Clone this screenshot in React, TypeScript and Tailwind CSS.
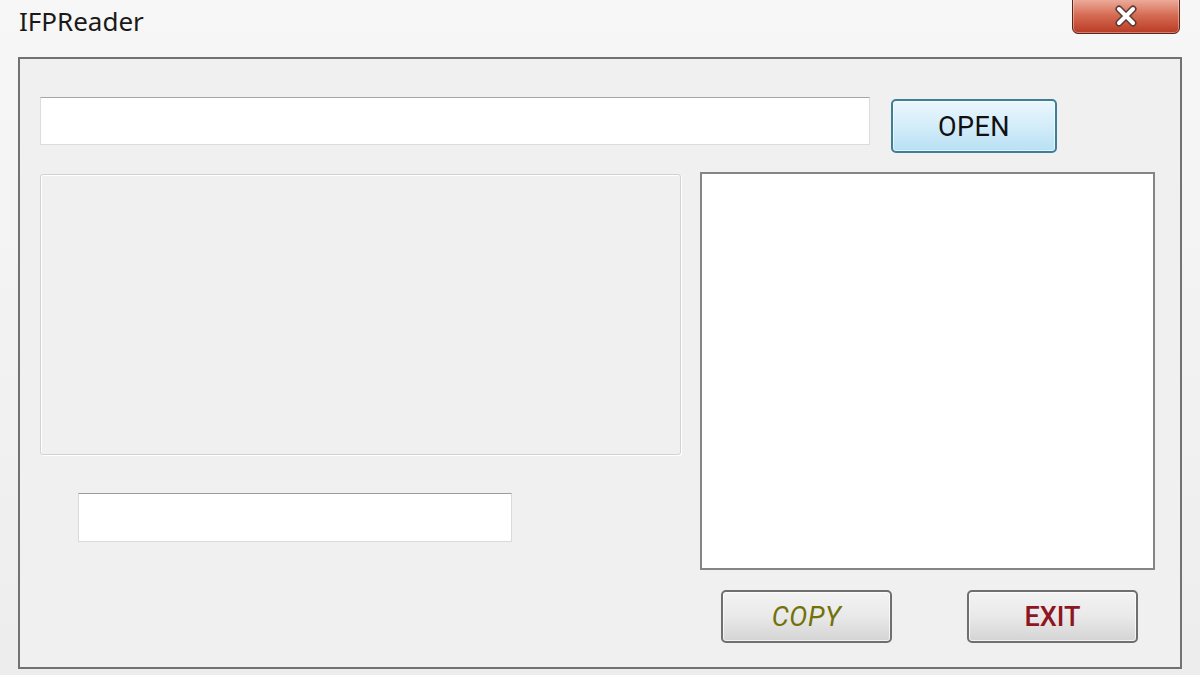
const App = () => {
  return (
    <div
      className="w-[1200px] h-[675px] overflow-hidden bg-gradient-to-b from-[#f7f7f7] to-[#ededed] flex flex-col"
      style={{ fontFamily: "Roboto, 'Noto Sans', sans-serif" }}
    >
      {/* Title bar */}
      <div className="h-[57px] flex items-start justify-between shrink-0">
        <div
          className="pl-[19px] pt-[5px] text-[26px] leading-[32px] text-[#1a1a1a]"
          style={{ fontFamily: "'Noto Sans', sans-serif" }}
        >
          IFPReader
        </div>
        <button className="mr-[20px] mt-[-3px] w-[108px] h-[37px] rounded-b-[6px] border border-[#5e2418] bg-gradient-to-b from-[#eeb2a2] via-[#d56a52] to-[#b93a22] flex items-center justify-center shadow-[inset_0_0_0_1px_rgba(255,255,255,0.35)]">
          <svg width="28" height="22" viewBox="0 0 28 22">
            <path d="M7 4 L21 18 M21 4 L7 18" stroke="#5a3a36" strokeWidth="7" strokeLinecap="round" />
            <path d="M7 4 L21 18 M21 4 L7 18" stroke="#ffffff" strokeWidth="4" strokeLinecap="round" />
          </svg>
        </button>
      </div>

      {/* Main panel */}
      <div className="ml-[18px] w-[1164px] h-[612px] border-2 border-[#727272] bg-[#f0f0f0] pl-[20px] pt-[38px] flex flex-col">
        {/* Top row */}
        <div className="flex items-start gap-[21px]">
          <div className="w-[830px] h-[48px] bg-white border border-[#dcdcdc] border-t-[#a6a6a6]" />
          <button className="mt-[2px] w-[166px] h-[54px] rounded-[5px] border-2 border-[#3f7f96] bg-gradient-to-b from-[#eaf6fc] via-[#d3edf9] to-[#b8e0f3] shadow-[inset_0_0_0_1px_rgba(255,255,255,0.6)] flex items-center justify-center pt-[2px] text-[27px] text-[#111] tracking-[0.5px]">
            OPEN
          </button>
        </div>

        {/* Body */}
        <div className="mt-[19px] flex gap-[19px]">
          {/* Left column */}
          <div className="w-[641px] flex flex-col">
            <div className="mt-[2px] h-[281px] rounded-[3px] border border-[#d2d2d2] shadow-[inset_1px_1px_0_#ffffff,1px_1px_0_#ffffff]" />
            <div className="mt-[38px] ml-[38px] w-[434px] h-[49px] bg-white border border-[#dadada] border-t-[#9c9c9c]" />
          </div>

          {/* Right column */}
          <div className="w-[455px] flex flex-col">
            <div className="h-[398px] bg-white border-2 border-[#858585]" />
            <div className="mt-[20px] ml-[21px] flex gap-[75px]">
              <button className="w-[171px] h-[53px] rounded-[5px] border-2 border-[#6f6f6f] bg-gradient-to-b from-[#f3f3f3] via-[#e9e9e9] to-[#d4d4d4] shadow-[inset_0_0_0_1px_rgba(255,255,255,0.7)] flex items-center justify-center pt-[2px]">
                <span className="italic text-[27px] text-[#727208] tracking-[0.5px]">COPY</span>
              </button>
              <button className="w-[171px] h-[53px] rounded-[5px] border-2 border-[#6f6f6f] bg-gradient-to-b from-[#f3f3f3] via-[#e9e9e9] to-[#d4d4d4] shadow-[inset_0_0_0_1px_rgba(255,255,255,0.7)] flex items-center justify-center pt-[2px]">
                <span className="font-medium text-[27px] text-[#8e1622]">EXIT</span>
              </button>
            </div>
          </div>
        </div>
      </div>
    </div>
  );
};

export default App;
